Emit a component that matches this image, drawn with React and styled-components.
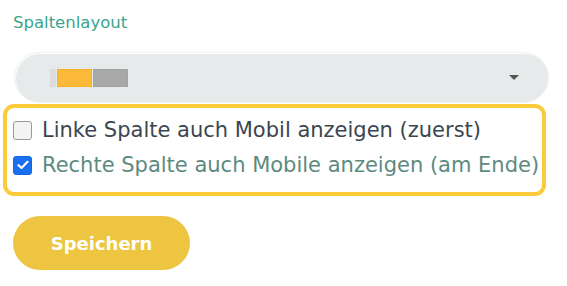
import React from "react";
import styled, { createGlobalStyle } from "styled-components";

const Global = createGlobalStyle`
  html, body { margin: 0; padding: 0; background: #fff; }
  body { font-family: "DejaVu Sans", "Open Sans", sans-serif; }
`;

const Page = styled.div`
  width: 567px;
  height: 286px;
  box-sizing: border-box;
  padding: 12px 18px 0 3px;
  display: flex;
  flex-direction: column;
`;

const Label = styled.div`
  font-size: 16.5px;
  color: #3aa58e;
  margin-left: 10px;
  line-height: 22px;
`;

const Select = styled.div`
  margin: 18px 0 0 11px;
  height: 51px;
  border-radius: 26px;
  background: #e7eaea;
  border: 1px solid #f1f3f3;
  box-shadow: inset 1px 1px 0 #fdfdfd;
  box-sizing: border-box;
  display: flex;
  align-items: center;
  padding: 0 29px 0 35px;
`;

const Bars = styled.div`
  display: flex;
  align-items: stretch;
  height: 18px;
  gap: 1px;
  flex: 1;
`;

const Bar = styled.div`
  width: ${(p) => p.$w}px;
  background: ${(p) => p.$c};
  box-sizing: border-box;
  border: 1px solid ${(p) => p.$b};
`;

const Caret = styled.div`
  width: 0;
  height: 0;
  border-left: 5px solid transparent;
  border-right: 5px solid transparent;
  border-top: 5px solid #555;
`;

const Highlight = styled.div`
  margin: 1px 3px 0 0;
  height: 92px;
  border: 4px solid #fbcb3a;
  border-radius: 11px;
  box-sizing: border-box;
  display: flex;
  flex-direction: column;
  justify-content: center;
  gap: 9px;
  padding: 0 0 5px 6px;
`;

const Row = styled.label`
  display: flex;
  align-items: center;
  gap: 10px;
  font-size: 21px;
  line-height: 26px;
  white-space: nowrap;
  color: ${(p) => (p.$checked ? "#5d8a7f" : "#3b4650")};
`;

const Box = styled.span`
  width: 19px;
  height: 19px;
  box-sizing: border-box;
  border-radius: 3px;
  flex: none;
  display: flex;
  align-items: center;
  justify-content: center;
  background: ${(p) => (p.$checked ? "#1a6ff0" : "#f3f3f3")};
  border: 1px solid ${(p) => (p.$checked ? "#1666e0" : "#9a9a9a")};
`;

const Button = styled.button`
  margin: 20px 0 0 10px;
  width: 177px;
  height: 54px;
  border: none;
  border-radius: 27px;
  background: #eec540;
  color: #fff;
  font-family: "DejaVu Sans", sans-serif;
  font-weight: 700;
  font-size: 18px;
  cursor: pointer;
`;

export default function App() {
  return (
    <>
      <Global />
      <Page>
        <Label>Spaltenlayout</Label>
        <Select>
          <Bars>
            <Bar $w={6} $c="#dcdcdc" $b="#dcdcdc" />
            <Bar $w={35} $c="#fbba3a" $b="#f8b020" />
            <Bar $w={35} $c="#a8a8a8" $b="#a3a3a3" />
          </Bars>
          <Caret />
        </Select>
        <Highlight>
          <Row>
            <Box />
            Linke Spalte auch Mobil anzeigen (zuerst)
          </Row>
          <Row $checked>
            <Box $checked>
              <svg width="12" height="10" viewBox="0 0 12 10">
                <path d="M1.5 5.2 L4.5 8 L10.5 1.8" fill="none" stroke="#fff" strokeWidth="2.2" strokeLinecap="round" strokeLinejoin="round" />
              </svg>
            </Box>
            Rechte Spalte auch Mobile anzeigen (am Ende)
          </Row>
        </Highlight>
        <Button>Speichern</Button>
      </Page>
    </>
  );
}
